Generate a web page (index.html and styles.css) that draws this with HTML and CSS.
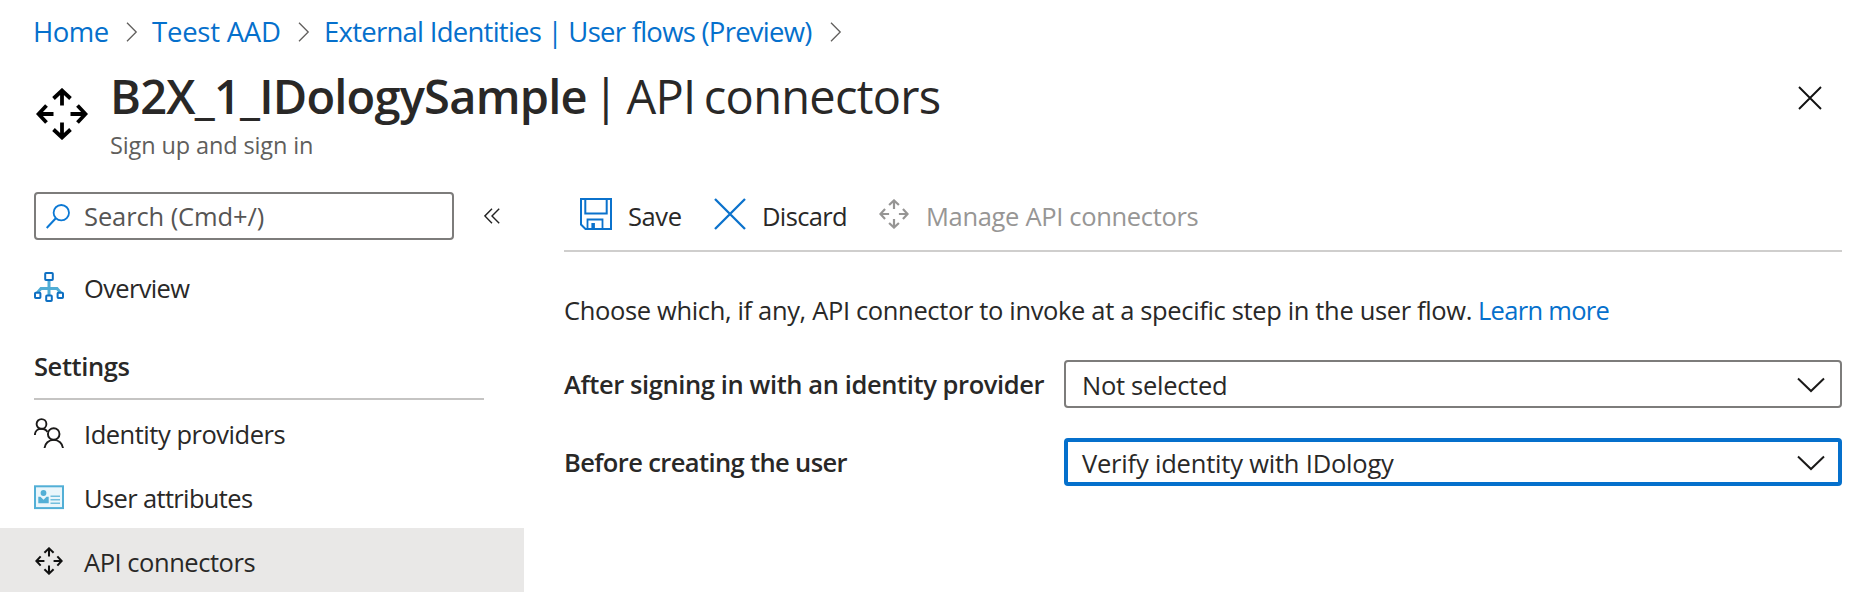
FILE: index.html
```html
<!DOCTYPE html>
<html lang="en">
<head>
<meta charset="utf-8">
<title>B2X_1_IDologySample | API connectors</title>
<link rel="stylesheet" href="styles.css">
</head>
<body>
<svg class="defs" width="0" height="0">
  <symbol id="connectors" viewBox="0 0 52 52">
    <path d="M26 17.500V2.500M17.500 10.500 26 2.500l8.500 8M26 34.500v15M17.500 41.500l8.500 8 8.500-8M17.500 26h-15M10.500 17.500 2.500 26l8 8.500M34.500 26h15M41.500 17.500l8 8.500-8 8.500" fill="none" stroke="currentColor" stroke-width="3.800"/>
  </symbol>
  <symbol id="sep" viewBox="0 0 12 20">
    <path d="M1 .8 10.200 10 1 19.200" fill="none" stroke="currentColor" stroke-width="1.300"/>
  </symbol>
  <symbol id="chevron" viewBox="0 0 28 16">
    <path d="M1 1.500l13 12.500 13-12.500" fill="none" stroke="currentColor" stroke-width="2"/>
  </symbol>
</svg>

<nav class="breadcrumb">
  <a class="crumb crumb-home">Home</a>
  <svg class="sep"><use href="#sep"/></svg>
  <a class="crumb crumb-tenant">Teest AAD</a>
  <svg class="sep"><use href="#sep"/></svg>
  <a class="crumb crumb-flows">External Identities | User flows (Preview)</a>
  <svg class="sep"><use href="#sep"/></svg>
</nav>

<header class="header">
  <svg class="header-icon"><use href="#connectors"/></svg>
  <div class="heading">
    <h1 class="title"><span class="title-name">B2X_1_IDologySample</span><span class="title-page">| API connectors</span></h1>
    <p class="subtitle">Sign up and sign in</p>
  </div>
  <svg class="close" viewBox="0 0 24 24"><path d="M1 1l22 22M23 1 1 23" stroke="#111" stroke-width="1.900"/></svg>
</header>

<div class="body">
  <aside class="sidebar">
    <div class="search-row">
      <div class="search">
        <svg class="search-icon" viewBox="0 0 24 25"><circle cx="15.300" cy="8.700" r="7.700" fill="none" stroke="#0b78d4" stroke-width="1.800"/><path d="M9.800 14.200.7 24" stroke="#0b78d4" stroke-width="2"/></svg>
        <span class="search-text">Search (Cmd+/)</span>
      </div>
      <svg class="collapse" viewBox="0 0 16 16"><path d="M8 .7.9 7.900 8 15.200M15.200.7 8 7.900l7.200 7.300" fill="none" stroke="#222" stroke-width="1.400"/></svg>
    </div>

    <a class="item item-overview">
      <svg class="item-icon" viewBox="0 0 30 30"><path d="M15 8v16M3.500 21.500v-1L7 16.500h16l3.500 4v1" fill="none" stroke="#50add5" stroke-width="3"/><g fill="#fff" stroke="#0d6fc2" stroke-width="2"><rect x="11.200" y="1" width="7.600" height="7" rx=".8"/><rect x="1" y="20.700" width="5.400" height="5.400" rx=".8"/><rect x="12.200" y="23.600" width="5.600" height="5.400" rx=".8"/><rect x="23.600" y="20.700" width="5.400" height="5.400" rx=".8"/></g></svg>
      <span class="label label-overview">Overview</span>
    </a>
    <h2 class="section">Settings</h2>
    <a class="item">
      <svg class="item-icon" viewBox="0 0 30 30"><g fill="none" stroke="#1b1a19" stroke-width="1.900"><circle cx="7.500" cy="6" r="4.900"/><path d="M.9 17c0-3.700 2.800-6.200 6.600-6.200 2.900 0 4.800 1.200 5.900 3.200"/><circle cx="19.700" cy="16" r="5.800"/><path d="M10.500 30.200c.4-4.900 4.200-8.300 9.200-8.300s8.800 3.400 9.300 8.300"/></g></svg>
      <span class="label label-providers">Identity providers</span>
    </a>
    <a class="item">
      <svg class="item-icon" viewBox="0 0 30 30"><rect x="1" y="4.300" width="28" height="21.800" fill="#eaf6fb" stroke="#52afd6" stroke-width="2"/><circle cx="9.500" cy="11" r="2.900" fill="#52afd6"/><path d="M4.300 21.300v-6.500h2.200l3 3 3-3h2.200v6.500z" fill="#52afd6"/><path d="M16.500 14.200H26M16.500 17.800H26M16.500 21.300H26" stroke="#72bedd" stroke-width="1.500"/></svg>
      <span class="label label-attributes">User attributes</span>
    </a>
    <a class="item item-selected">
      <svg class="item-icon item-icon-connectors"><use href="#connectors"/></svg>
      <span class="label label-connectors">API connectors</span>
    </a>
  </aside>

  <main class="main">
    <div class="toolbar">
      <svg class="tool-icon" viewBox="0 0 32 32"><g fill="none" stroke="#0b72cc"><path d="M1 1h30v30H5.500L1 26.500z" stroke-width="2"/><path d="M5.300 1v14.500h21.400V1" stroke-width="2"/><path d="M7.500 31v-9.500h15V31M12.300 31v-5h1.700v5" stroke-width="1.800"/></g></svg>
      <span class="tool-label tool-save">Save</span>
      <svg class="tool-icon" viewBox="0 0 32 32"><path d="M1 1l30 30M31 1 1 31" stroke="#0b72cc" stroke-width="2.300"/></svg>
      <span class="tool-label tool-discard">Discard</span>
      <svg class="tool-icon tool-icon-connectors"><use href="#connectors"/></svg>
      <span class="tool-label tool-manage">Manage API connectors</span>
    </div>

    <p class="intro"><span class="intro-text">Choose which, if any, API connector to invoke at a specific step in the user flow.</span><a class="learn">Learn more</a></p>

    <div class="form">
      <label class="field-label field-after">After signing in with an identity provider</label>
      <div class="select">
        <span class="value-none">Not selected</span>
        <svg class="chevron"><use href="#chevron"/></svg>
      </div>
      <label class="field-label field-before">Before creating the user</label>
      <div class="select select-focus">
        <span class="value-verify">Verify identity with IDology</span>
        <svg class="chevron"><use href="#chevron"/></svg>
      </div>
    </div>
  </main>
</div>
</body>
</html>
```
FILE: styles.css
```css
* { box-sizing: border-box; }
body {
  margin: 0;
  background: #fff;
  color: #292827;
  font: 25.5px/36px "Open Sans", "Noto Sans", sans-serif;
  white-space: nowrap;
}
h1, h2, p { margin: 0; font-weight: 400; }
svg { display: block; flex: none; }
.defs { position: absolute; }

.breadcrumb {
  display: flex;
  align-items: center;
  height: 62px;
  padding: 2px 0 0 33px;
}
.crumb {
  font-size: 27.5px;
  color: #0570cc;
}
.crumb-home { width: 93px; letter-spacing: -0.5px; }
.crumb-tenant { width: 146px; letter-spacing: -0.23px; }
.crumb-flows { width: 506px; letter-spacing: -0.74px; }
.sep {
  width: 12px;
  height: 20px;
  margin-right: 14px;
  color: #605e5c;
}

.header {
  display: flex;
  align-items: flex-start;
  height: 118px;
  padding: 0 54px 0 36px;
}
.header-icon {
  width: 52px;
  height: 52px;
  margin-top: 26px;
  color: #000;
}
.heading {
  flex: 1;
  padding: 4px 0 0 22px;
}
.title {
  display: flex;
  font-size: 47px;
  line-height: 60px;
}
.title-name { width: 483px; font-weight: 600; letter-spacing: -0.79px; }
.title-page { letter-spacing: -0.75px; word-spacing: -3px; }
.subtitle {
  font-size: 23.5px;
  line-height: 38px;
  letter-spacing: -0.13px;
  color: #605e5c;
}
.close {
  width: 24px;
  height: 24px;
  margin-top: 24px;
}

.body { display: flex; }
.sidebar { width: 524px; padding-top: 12px; }
.search-row {
  display: flex;
  align-items: center;
  gap: 30px;
  height: 48px;
  padding-left: 34px;
}
.search {
  display: flex;
  align-items: center;
  gap: 14px;
  width: 420px;
  height: 48px;
  padding-left: 10px;
  border: 2px solid #7d7c7b;
  border-radius: 4px;
}
.search-icon { width: 24px; height: 25px; }
.search-text { color: #565554; letter-spacing: -0.1px; }
.collapse { width: 16px; height: 16px; }

.item {
  display: flex;
  align-items: center;
  gap: 20px;
  height: 64px;
  padding-left: 34px;
}
.item-overview { margin-top: 14px; }
.item-selected { background: #e9e8e7; }
.item-icon { width: 30px; height: 30px; margin-top: 2px; color: #111; }
.item-icon-connectors { padding: 1px; }
.label { padding-top: 4px; }
.label-overview { letter-spacing: -0.65px; }
.label-providers { letter-spacing: -0.48px; }
.label-attributes { letter-spacing: -0.64px; }
.label-connectors { letter-spacing: -0.46px; }
.section {
  height: 82px;
  margin: 0 40px 0 34px;
  padding-top: 30px;
  border-bottom: 2px solid #c5c4c3;
  font-size: 25.5px;
  font-weight: 600;
  letter-spacing: -0.4px;
}

.main { flex: 1; padding: 0 34px 0 40px; }
.toolbar {
  display: flex;
  align-items: center;
  height: 72px;
  padding: 0 0 2px 16px;
  border-bottom: 2px solid #cfcecd;
}
.tool-icon { width: 32px; height: 32px; margin-right: 16px; }
.tool-icon-connectors { width: 30px; height: 30px; margin-right: 17px; color: #969594; }
.tool-label { padding-top: 4px; }
.tool-save { width: 86px; letter-spacing: -0.4px; }
.tool-discard { width: 117px; letter-spacing: -0.65px; }
.tool-manage { color: #979695; letter-spacing: -0.33px; }

.intro { display: flex; margin-top: 40px; }
.intro-text { width: 914px; letter-spacing: -0.35px; }
.learn { color: #0570cc; letter-spacing: -0.7px; }

.form {
  display: grid;
  grid-template-columns: 500px 1fr;
  row-gap: 30px;
  align-items: center;
  margin-top: 32px;
}
.field-label { font-weight: 600; }
.field-after { letter-spacing: -0.4px; }
.field-before { letter-spacing: -0.62px; }
.select {
  display: flex;
  align-items: center;
  justify-content: space-between;
  height: 48px;
  padding: 2px 15px 0;
  border: 2px solid #7d7c7b;
  border-radius: 4px;
}
.select-focus { padding: 2px 13px 0; border: 4px solid #0570cc; }
.value-none, .value-verify { margin-top: -1px; padding-left: 1px; }
.value-none { letter-spacing: -0.29px; }
.value-verify { letter-spacing: -0.2px; }
.chevron { width: 28px; height: 16px; color: #1b1a19; }
```
